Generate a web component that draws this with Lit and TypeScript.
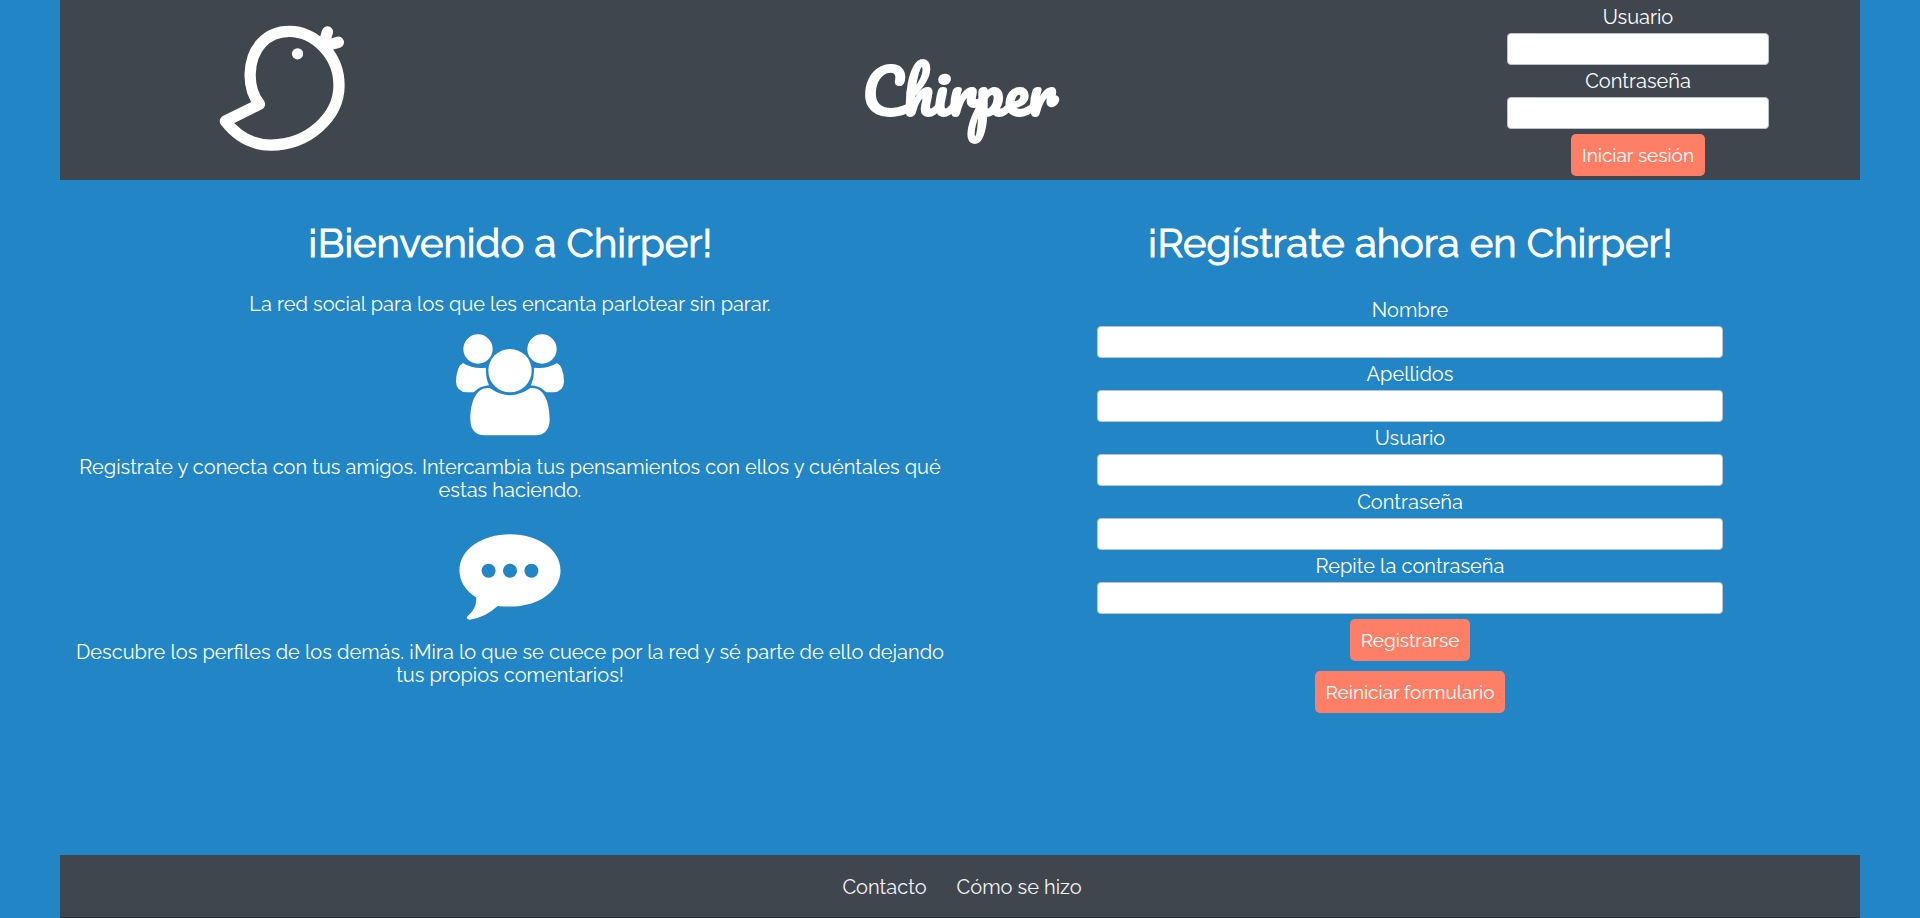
import { LitElement, html, css, svg } from "lit";
import { customElement } from "lit/decorators.js";

const controls = css`
  * {
    box-sizing: border-box;
  }
  .field {
    display: flex;
    flex-direction: column;
    gap: 4px;
    width: 100%;
  }
  .label {
    line-height: 24px;
    text-align: center;
  }
  .input {
    width: 100%;
    height: 32px;
    padding: 4px 8px;
    border: 1px solid #b9c4cd;
    border-radius: 4px;
    background: #fff;
    color: #40464e;
    font: inherit;
  }
  .button {
    height: 42px;
    margin-top: 1px;
    padding: 0 11px;
    border: 0;
    border-radius: 5px;
    background: #ff7f66;
    color: #fff;
    font: inherit;
    font-size: 19px;
    line-height: 42px;
    cursor: pointer;
  }
`;

const field = (id: string, label: string, type = "text") => html`
  <div class="field">
    <label class="label" for=${id}>${label}</label>
    <input class="input" id=${id} name=${id} type=${type} />
  </div>
`;

const birdLogo = svg`
  <g fill="none" stroke="#fff" stroke-width="34" stroke-linecap="round" stroke-linejoin="round">
    <path d="M75 333 L178 282 C158 256 149 226 150 190 C152 115 198 62 268 62 C345 62 418 135 418 225 C418 320 325 405 212 405 C158 405 112 381 75 333 Z" />
    <path d="M372 100 L383 64 M378 106 L416 95" />
  </g>
  <circle cx="293" cy="130" r="17" fill="#fff" />
`;

const friendsIcon = svg`
  <g fill="#fff">
    <circle cx="145" cy="87" r="44" />
    <circle cx="337" cy="87" r="44" />
    <circle cx="241" cy="152" r="65" />
    <path d="M100 129 Q80 140 79 185 Q80 215 112 217 L132 217 Q150 198 178 196 Q167 172 169 143 Q130 148 100 129 Z" />
    <path d="M382 129 Q402 140 403 185 Q402 215 370 217 L350 217 Q332 198 304 196 Q315 172 313 143 Q352 148 382 129 Z" />
    <path d="M180 204 Q241 248 302 204 C340 200 360 240 360 300 Q358 345 318 346 L164 346 Q124 345 122 300 C122 240 142 200 180 204 Z" />
  </g>
`;

const chatIcon = svg`
  <path fill="#fff" d="M241 44 C325 44 392 90 392 152 C392 214 325 260 241 260 Q222 260 204 258 Q165 294 120 299 Q108 298 114 289 Q143 265 140 233 C108 212 90 184 90 152 C90 90 157 44 241 44 Z" />
  <g fill="#2185c6">
    <circle cx="177" cy="153" r="21" />
    <circle cx="241" cy="153" r="21" />
    <circle cx="305" cy="153" r="21" />
  </g>
`;

@customElement("chirper-header")
class ChirperHeader extends LitElement {
  static styles = [
    controls,
    css`
      :host {
        display: block;
      }
      .header {
        display: grid;
        grid-template-columns: 37fr 76fr 37fr;
        min-height: 180px;
        background: #40464e;
      }
      .brand,
      .title-cell,
      .login {
        display: flex;
        align-items: center;
        justify-content: center;
      }
      .brand {
        padding-bottom: 4px;
      }
      .title-cell {
        padding-top: 2px;
      }
      .bird {
        width: 126px;
        height: 126px;
      }
      .title {
        margin: 0;
        font-family: Pacifico, Lato, cursive;
        font-size: 60px;
        line-height: 72px;
        font-weight: 700;
      }
      .login {
        flex-direction: column;
        justify-content: flex-start;
        gap: 4px;
        width: 59%;
        margin: 0 auto;
        padding: 5px 0 4px;
      }
    `,
  ];

  render() {
    return html`
      <header class="header">
        <div class="brand">
          <svg class="bird" viewBox="57 43 378 380" role="img" aria-label="Chirper">${birdLogo}</svg>
        </div>
        <div class="title-cell"><h1 class="title">Chirper</h1></div>
        <form class="login" @submit=${(e: Event) => e.preventDefault()}>
          ${field("usuario-login", "Usuario")}
          ${field("clave-login", "Contraseña", "password")}
          <button class="button" type="submit">Iniciar sesión</button>
        </form>
      </header>
    `;
  }
}

@customElement("chirper-welcome")
class ChirperWelcome extends LitElement {
  static styles = css`
    :host {
      display: block;
      text-align: center;
    }
    .heading {
      margin: 0 0 27px;
      font-size: 40px;
      line-height: 46px;
      font-weight: 400;
      -webkit-text-stroke: 1px #fff;
    }
    .text {
      margin: 0;
      line-height: 23px;
    }
    .icon {
      display: block;
      margin: 0 auto;
    }
    .friends {
      width: 108px;
      height: 102px;
      margin-top: 18px;
      margin-bottom: 20px;
    }
    .chat {
      width: 102px;
      height: 86px;
      margin-top: 32px;
      margin-bottom: 21px;
    }
  `;

  render() {
    return html`
      <section>
        <h2 class="heading">¡Bienvenido a Chirper!</h2>
        <p class="text">La red social para los que les encanta parlotear sin parar.</p>
        <svg class="icon friends" viewBox="79 43 324 304" aria-hidden="true">${friendsIcon}</svg>
        <p class="text">
          Registrate y conecta con tus amigos. Intercambia tus pensamientos con ellos y cuéntales qué
          estas haciendo.
        </p>
        <svg class="icon chat" viewBox="89 43 304 257" aria-hidden="true">${chatIcon}</svg>
        <p class="text">
          Descubre los perfiles de los demás. ¡Mira lo que se cuece por la red y sé parte de ello dejando
          tus propios comentarios!
        </p>
      </section>
    `;
  }
}

@customElement("chirper-signup")
class ChirperSignup extends LitElement {
  static styles = [
    controls,
    css`
      :host {
        display: block;
        text-align: center;
      }
      .heading {
        margin: 0 0 32px;
        font-size: 40px;
        line-height: 46px;
        font-weight: 400;
        -webkit-text-stroke: 1px #fff;
      }
      .form {
        display: flex;
        flex-direction: column;
        align-items: center;
        gap: 4px;
        width: 72%;
        margin: 0 auto;
      }
      .actions {
        display: flex;
        flex-direction: column;
        align-items: center;
        gap: 9px;
      }
    `,
  ];

  render() {
    return html`
      <section>
        <h2 class="heading">¡Regístrate ahora en Chirper!</h2>
        <form class="form" @submit=${(e: Event) => e.preventDefault()}>
          ${field("nombre", "Nombre")}
          ${field("apellidos", "Apellidos")}
          ${field("usuario", "Usuario")}
          ${field("clave", "Contraseña", "password")}
          ${field("clave-repetida", "Repite la contraseña", "password")}
          <div class="actions">
            <button class="button" type="submit">Registrarse</button>
            <button class="button" type="reset">Reiniciar formulario</button>
          </div>
        </form>
      </section>
    `;
  }
}

@customElement("app-root")
class AppRoot extends LitElement {
  static styles = css`
    :host {
      display: block;
      background: #2185c6;
      color: #fff;
      font-family: Raleway, Lato, sans-serif;
      font-size: 20px;
    }
    .page {
      display: flex;
      flex-direction: column;
      min-height: 100vh;
      margin: 0 60px;
    }
    .main {
      display: grid;
      grid-template-columns: 1fr 1fr;
      flex: 1;
      padding: 40px 0;
    }
    .column {
      padding: 0 15px;
    }
    .footer {
      display: flex;
      align-items: center;
      justify-content: center;
      gap: 30px;
      box-sizing: border-box;
      height: 63px;
      padding: 2px 0 0 4px;
      border-bottom: 1px solid #272e36;
      background: #40464e;
    }
    .link {
      color: #f2f4f6;
      text-decoration: none;
    }
  `;

  render() {
    return html`
      <div class="page">
        <chirper-header></chirper-header>
        <main class="main">
          <chirper-welcome class="column"></chirper-welcome>
          <chirper-signup class="column"></chirper-signup>
        </main>
        <footer class="footer">
          <a class="link" href="#contacto">Contacto</a>
          <a class="link" href="#como-se-hizo">Cómo se hizo</a>
        </footer>
      </div>
    `;
  }
}
